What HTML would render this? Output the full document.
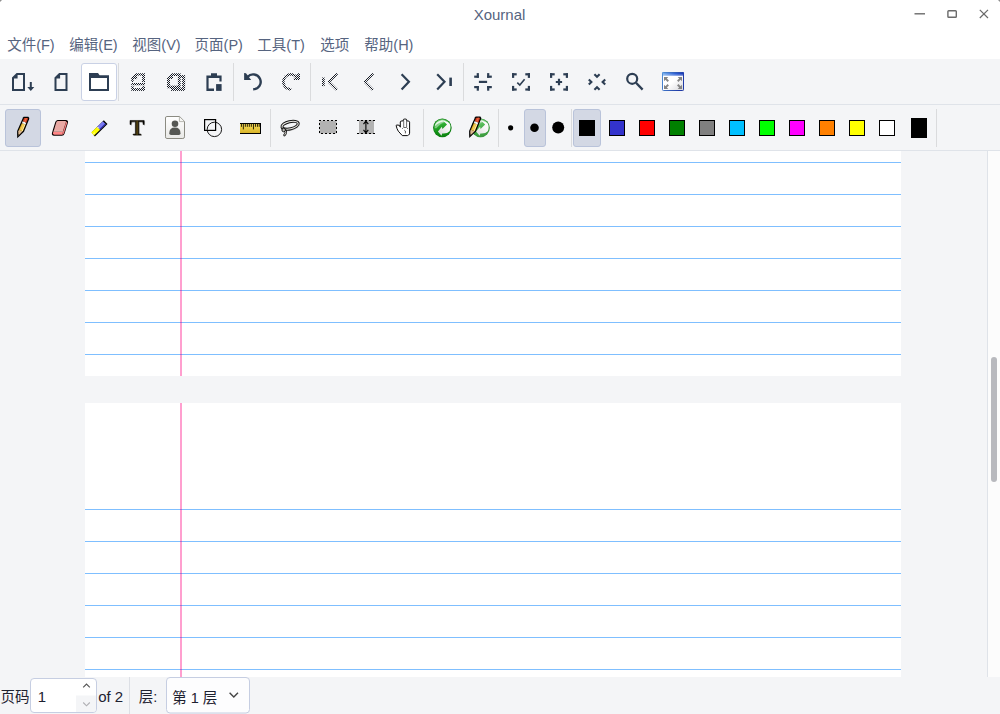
<!DOCTYPE html>
<html><head><meta charset="utf-8"><title>Xournal</title>
<style>html,body{margin:0;padding:0;background:#f4f5f7;overflow:hidden;font-family:"Liberation Sans",sans-serif}body{width:1000px;height:714px}</style>
</head><body><svg width="1000" height="714" viewBox="0 0 1000 714" style="display:block"><defs>
<pattern id="dz" width="2" height="2" patternUnits="userSpaceOnUse"><rect x="0" y="0" width="1" height="1" fill="#15151d"/><rect x="1" y="1" width="1" height="1" fill="#15151d"/></pattern>
<linearGradient id="fsbar" x1="0" y1="0" x2="1" y2="0"><stop offset="0" stop-color="#7fb4ec"/><stop offset="0.6" stop-color="#2f62d6"/><stop offset="1" stop-color="#1a37b4"/></linearGradient>
<linearGradient id="fsbd" x1="0" y1="0" x2="1" y2="0.3"><stop offset="0" stop-color="#4f8fd6"/><stop offset="1" stop-color="#1f3aa6"/></linearGradient><linearGradient id="fsbody" x1="0" y1="0" x2="1" y2="1"><stop offset="0" stop-color="#ffffff"/><stop offset="0.5" stop-color="#ffffff"/><stop offset="1" stop-color="#d4d4d8"/></linearGradient>
<linearGradient id="ruler" x1="0" y1="0" x2="0" y2="1"><stop offset="0" stop-color="#f6dc55"/><stop offset="1" stop-color="#d9b52c"/></linearGradient>
<linearGradient id="docg" x1="0" y1="0" x2="0" y2="1"><stop offset="0" stop-color="#ffffff"/><stop offset="1" stop-color="#e9e9e7"/></linearGradient>
<linearGradient id="greeng" x1="0.2" y1="0" x2="0.5" y2="1"><stop offset="0" stop-color="#8fd98f"/><stop offset="0.35" stop-color="#2fae32"/><stop offset="0.7" stop-color="#109014"/><stop offset="1" stop-color="#0e8a12"/></linearGradient><linearGradient id="gwh" x1="1" y1="0" x2="0.2" y2="1"><stop offset="0" stop-color="#ffffff"/><stop offset="0.45" stop-color="#f4f4f4"/><stop offset="1" stop-color="#d8d8d8"/></linearGradient>
<radialGradient id="greeng2" cx="0.4" cy="0.3" r="0.8"><stop offset="0" stop-color="#7fd67f"/><stop offset="0.6" stop-color="#3aa93c"/><stop offset="1" stop-color="#1d8a20"/></radialGradient>
<linearGradient id="tg" x1="0" y1="0" x2="1" y2="0"><stop offset="0" stop-color="#000"/><stop offset="0.42" stop-color="#1a1200"/><stop offset="0.5" stop-color="#6a5618"/><stop offset="0.58" stop-color="#1a1200"/><stop offset="1" stop-color="#000"/></linearGradient>
</defs>
<rect x="0" y="0" width="1000" height="714" fill="#f4f5f7"/>
<rect x="0" y="0" width="1000" height="59" fill="#ffffff"/>
<path d="M0 0h2L0 2z" fill="#444" opacity=".6"/><path d="M1000 0h-2l2 2z" fill="#444" opacity=".6"/>
<text x="499.5" y="19.6" text-anchor="middle" font-family="'Liberation Sans','Noto Sans CJK SC',sans-serif" font-size="15" fill="#566480">Xournal</text>
<g stroke="#6a6a6a" fill="none" stroke-width="1.4"><path d="M914.5 13.8H925"/><rect x="947.9" y="10.7" width="8.4" height="6.6" rx="0.8"/><path d="M979.8 9.8L988 18M988 9.8L979.8 18" stroke-width="1.2"/></g>
<g font-family="'Liberation Sans','Noto Sans CJK SC',sans-serif" font-size="14.5" fill="#566480">
<text x="7.2" y="49.8">文件(F)</text>
<text x="69.3" y="49.8">编辑(E)</text>
<text x="132.3" y="49.8">视图(V)</text>
<text x="194.6" y="49.8">页面(P)</text>
<text x="257.3" y="49.8">工具(T)</text>
<text x="320.3" y="49.8">选项</text>
<text x="364.3" y="49.8">帮助(H)</text>
</g>
<rect x="0" y="104" width="1000" height="1" fill="#dfe3e9"/>
<rect x="0" y="150" width="1000" height="1" fill="#dfe3e9"/>
<rect x="85" y="151" width="816" height="225" fill="#fff"/>
<rect x="85" y="403" width="816" height="274" fill="#fff"/>
<rect x="85" y="162" width="816" height="1" fill="#7fbfff"/>
<rect x="85" y="194" width="816" height="1" fill="#7fbfff"/>
<rect x="85" y="226" width="816" height="1" fill="#7fbfff"/>
<rect x="85" y="258" width="816" height="1" fill="#7fbfff"/>
<rect x="85" y="290" width="816" height="1" fill="#7fbfff"/>
<rect x="85" y="322" width="816" height="1" fill="#7fbfff"/>
<rect x="85" y="354" width="816" height="1" fill="#7fbfff"/>
<rect x="85" y="509" width="816" height="1" fill="#7fbfff"/>
<rect x="85" y="541" width="816" height="1" fill="#7fbfff"/>
<rect x="85" y="573" width="816" height="1" fill="#7fbfff"/>
<rect x="85" y="605" width="816" height="1" fill="#7fbfff"/>
<rect x="85" y="637" width="816" height="1" fill="#7fbfff"/>
<rect x="85" y="669" width="816" height="1" fill="#7fbfff"/>
<rect x="180" y="151" width="2" height="225" fill="#ff9fcf"/>
<rect x="180" y="403" width="2" height="274" fill="#ff9fcf"/>
<rect x="180" y="162" width="2" height="1" fill="#a673cf"/>
<rect x="180" y="194" width="2" height="1" fill="#a673cf"/>
<rect x="180" y="226" width="2" height="1" fill="#a673cf"/>
<rect x="180" y="258" width="2" height="1" fill="#a673cf"/>
<rect x="180" y="290" width="2" height="1" fill="#a673cf"/>
<rect x="180" y="322" width="2" height="1" fill="#a673cf"/>
<rect x="180" y="354" width="2" height="1" fill="#a673cf"/>
<rect x="180" y="509" width="2" height="1" fill="#a673cf"/>
<rect x="180" y="541" width="2" height="1" fill="#a673cf"/>
<rect x="180" y="573" width="2" height="1" fill="#a673cf"/>
<rect x="180" y="605" width="2" height="1" fill="#a673cf"/>
<rect x="180" y="637" width="2" height="1" fill="#a673cf"/>
<rect x="180" y="669" width="2" height="1" fill="#a673cf"/>
<rect x="987" y="151" width="1" height="526" fill="#dfe3e9"/>
<rect x="988" y="151" width="12" height="526" fill="#fcfcfc"/>
<rect x="991" y="357" width="6" height="125" rx="3" fill="#b8b9be"/>
<text x="0.5" y="702.2" font-family="'Liberation Sans','Noto Sans CJK SC',sans-serif" font-size="14.5" fill="#1e2230">页码</text>
<rect x="30.5" y="678.5" width="66" height="34" rx="3.5" fill="#fff" stroke="#c6cee2"/>
<path d="M76 695.5H96V709a3 3 0 0 1-3 3H76z" fill="#f4f5f7"/>
<text x="37.8" y="702.2" font-family="'Liberation Sans','Noto Sans CJK SC',sans-serif" font-size="15" fill="#1e2230">1</text>
<path d="M83.2 687.3L86.5 684L89.8 687.3" fill="none" stroke="#555" stroke-width="1.15"/>
<path d="M83.2 702.5L86.5 705.8L89.8 702.5" fill="none" stroke="#b0b0b4" stroke-width="1.15"/>
<text x="98.2" y="702.2" font-family="'Liberation Sans','Noto Sans CJK SC',sans-serif" font-size="15" fill="#1e2230">of 2</text>
<rect x="129" y="677" width="1" height="37" fill="#dcdfe5"/>
<text x="138.8" y="702.2" font-family="'Liberation Sans','Noto Sans CJK SC',sans-serif" font-size="14.5" fill="#1e2230">层:</text>
<rect x="166.5" y="677.5" width="83" height="35.5" rx="3.5" fill="#fdfdfe" stroke="#c6cee2"/>
<text x="172.2" y="702.6" font-family="'Liberation Sans','Noto Sans CJK SC',sans-serif" font-size="14.5" fill="#1e2230">第 1 层</text>
<path d="M229.6 692.8L233.8 697L238 692.8" fill="none" stroke="#444" stroke-width="1.4"/>
<rect x="118" y="63" width="1" height="38" fill="#dadbdd"/>
<rect x="233" y="63" width="1" height="38" fill="#dadbdd"/>
<rect x="310" y="63" width="1" height="38" fill="#dadbdd"/>
<rect x="463" y="63" width="1" height="38" fill="#dadbdd"/>
<rect x="81.5" y="63.5" width="35" height="37" rx="2.5" fill="#fff" stroke="#c9d1e5"/>
<path fill-rule="evenodd" fill="#2d3e53" d="M16.6 73H25V91H12V77.6Z M14 78.6V89H23V75H17.6V78.6Z"/>
<path fill="#2d3e53" d="M29.8 82h2v5h2.5L30.8 91L27.3 87H29.8z"/>
<path fill-rule="evenodd" fill="#2d3e53" d="M59.1 73H67.5V91H54.5V77.6Z M56.5 78.6V89H65.5V75H60.1V78.6Z"/>
<path fill-rule="evenodd" fill="#2d3e53" d="M89 73H98L99.6 75.2H109V91H89Z M91 78V89H107V78Z"/>
<g fill="#161a24" shape-rendering="crispEdges"><rect x="136" y="73" width="1" height="1" fill-opacity="0.75"/><rect x="138" y="73" width="1" height="1" fill-opacity="0.75"/><rect x="140" y="73" width="1" height="1" fill-opacity="0.75"/><rect x="142" y="73" width="1" height="1" fill-opacity="0.75"/><rect x="144" y="73" width="1" height="1" fill-opacity="0.75"/><rect x="135" y="74" width="1" height="1"/><rect x="137" y="74" width="1" height="1"/><rect x="139" y="74" width="1" height="1"/><rect x="141" y="74" width="1" height="1"/><rect x="143" y="74" width="1" height="1"/><rect x="134" y="75" width="1" height="1"/><rect x="136" y="75" width="1" height="1"/><rect x="138" y="75" width="1" height="1" fill-opacity="0.62"/><rect x="140" y="75" width="1" height="1" fill-opacity="0.62"/><rect x="142" y="75" width="1" height="1"/><rect x="144" y="75" width="1" height="1"/><rect x="133" y="76" width="1" height="1"/><rect x="135" y="76" width="1" height="1"/><rect x="137" y="76" width="1" height="1" fill-opacity="0.12"/><rect x="143" y="76" width="1" height="1"/><rect x="132" y="77" width="1" height="1"/><rect x="134" y="77" width="1" height="1"/><rect x="136" y="77" width="1" height="1"/><rect x="142" y="77" width="1" height="1" fill-opacity="0.88"/><rect x="144" y="77" width="1" height="1"/><rect x="131" y="78" width="1" height="1" fill-opacity="0.75"/><rect x="133" y="78" width="1" height="1"/><rect x="135" y="78" width="1" height="1"/><rect x="137" y="78" width="1" height="1" fill-opacity="0.12"/><rect x="143" y="78" width="1" height="1"/><rect x="132" y="79" width="1" height="1"/><rect x="134" y="79" width="1" height="1" fill-opacity="0.12"/><rect x="136" y="79" width="1" height="1" fill-opacity="0.12"/><rect x="142" y="79" width="1" height="1" fill-opacity="0.88"/><rect x="144" y="79" width="1" height="1"/><rect x="131" y="80" width="1" height="1" fill-opacity="0.75"/><rect x="133" y="80" width="1" height="1" fill-opacity="0.62"/><rect x="143" y="80" width="1" height="1"/><rect x="132" y="81" width="1" height="1"/><rect x="142" y="81" width="1" height="1" fill-opacity="0.88"/><rect x="144" y="81" width="1" height="1"/><rect x="143" y="82" width="1" height="1" fill-opacity="0.12"/><rect x="132" y="83" width="1" height="1"/><rect x="134" y="83" width="1" height="1"/><rect x="136" y="83" width="1" height="1"/><rect x="138" y="83" width="1" height="1"/><rect x="140" y="83" width="1" height="1"/><rect x="142" y="83" width="1" height="1"/><rect x="144" y="83" width="1" height="1"/><rect x="131" y="84" width="1" height="1" fill-opacity="0.75"/><rect x="133" y="84" width="1" height="1"/><rect x="135" y="84" width="1" height="1"/><rect x="137" y="84" width="1" height="1"/><rect x="139" y="84" width="1" height="1"/><rect x="141" y="84" width="1" height="1"/><rect x="143" y="84" width="1" height="1"/><rect x="132" y="85" width="1" height="1" fill-opacity="0.25"/><rect x="134" y="85" width="1" height="1" fill-opacity="0.25"/><rect x="136" y="85" width="1" height="1" fill-opacity="0.25"/><rect x="138" y="85" width="1" height="1" fill-opacity="0.25"/><rect x="140" y="85" width="1" height="1" fill-opacity="0.25"/><rect x="142" y="85" width="1" height="1" fill-opacity="0.25"/><rect x="144" y="85" width="1" height="1" fill-opacity="0.25"/><rect x="131" y="86" width="1" height="1" fill-opacity="0.66"/><rect x="133" y="86" width="1" height="1" fill-opacity="0.55"/><rect x="143" y="86" width="1" height="1" fill-opacity="0.88"/><rect x="132" y="87" width="1" height="1"/><rect x="142" y="87" width="1" height="1" fill-opacity="0.88"/><rect x="144" y="87" width="1" height="1"/><rect x="131" y="88" width="1" height="1" fill-opacity="0.75"/><rect x="133" y="88" width="1" height="1"/><rect x="135" y="88" width="1" height="1" fill-opacity="0.88"/><rect x="137" y="88" width="1" height="1" fill-opacity="0.88"/><rect x="139" y="88" width="1" height="1" fill-opacity="0.88"/><rect x="141" y="88" width="1" height="1" fill-opacity="0.88"/><rect x="143" y="88" width="1" height="1"/><rect x="132" y="89" width="1" height="1"/><rect x="134" y="89" width="1" height="1"/><rect x="136" y="89" width="1" height="1"/><rect x="138" y="89" width="1" height="1"/><rect x="140" y="89" width="1" height="1"/><rect x="142" y="89" width="1" height="1"/><rect x="144" y="89" width="1" height="1"/><rect x="131" y="90" width="1" height="1" fill-opacity="0.66"/><rect x="133" y="90" width="1" height="1" fill-opacity="0.88"/><rect x="135" y="90" width="1" height="1" fill-opacity="0.88"/><rect x="137" y="90" width="1" height="1" fill-opacity="0.88"/><rect x="139" y="90" width="1" height="1" fill-opacity="0.88"/><rect x="141" y="90" width="1" height="1" fill-opacity="0.88"/><rect x="143" y="90" width="1" height="1" fill-opacity="0.88"/></g>
<g fill="#161a24" shape-rendering="crispEdges"><rect x="172" y="73" width="1" height="1" fill-opacity="0.75"/><rect x="174" y="73" width="1" height="1" fill-opacity="0.75"/><rect x="176" y="73" width="1" height="1" fill-opacity="0.75"/><rect x="178" y="73" width="1" height="1" fill-opacity="0.75"/><rect x="180" y="73" width="1" height="1" fill-opacity="0.47"/><rect x="171" y="74" width="1" height="1"/><rect x="173" y="74" width="1" height="1"/><rect x="175" y="74" width="1" height="1"/><rect x="177" y="74" width="1" height="1"/><rect x="179" y="74" width="1" height="1"/><rect x="170" y="75" width="1" height="1"/><rect x="172" y="75" width="1" height="1"/><rect x="174" y="75" width="1" height="1"/><rect x="176" y="75" width="1" height="1"/><rect x="178" y="75" width="1" height="1"/><rect x="180" y="75" width="1" height="1"/><rect x="182" y="75" width="1" height="1" fill-opacity="0.88"/><rect x="184" y="75" width="1" height="1" fill-opacity="0.88"/><rect x="169" y="76" width="1" height="1"/><rect x="171" y="76" width="1" height="1"/><rect x="177" y="76" width="1" height="1" fill-opacity="0.12"/><rect x="179" y="76" width="1" height="1"/><rect x="181" y="76" width="1" height="1"/><rect x="183" y="76" width="1" height="1"/><rect x="185" y="76" width="1" height="1" fill-opacity="0.12"/><rect x="168" y="77" width="1" height="1"/><rect x="170" y="77" width="1" height="1"/><rect x="172" y="77" width="1" height="1"/><rect x="178" y="77" width="1" height="1"/><rect x="180" y="77" width="1" height="1" fill-opacity="0.86"/><rect x="182" y="77" width="1" height="1"/><rect x="184" y="77" width="1" height="1"/><rect x="167" y="78" width="1" height="1"/><rect x="169" y="78" width="1" height="1"/><rect x="171" y="78" width="1" height="1"/><rect x="177" y="78" width="1" height="1" fill-opacity="0.12"/><rect x="179" y="78" width="1" height="1"/><rect x="183" y="78" width="1" height="1"/><rect x="185" y="78" width="1" height="1" fill-opacity="0.12"/><rect x="168" y="79" width="1" height="1"/><rect x="178" y="79" width="1" height="1"/><rect x="180" y="79" width="1" height="1" fill-opacity="0.62"/><rect x="182" y="79" width="1" height="1" fill-opacity="0.88"/><rect x="184" y="79" width="1" height="1"/><rect x="167" y="80" width="1" height="1"/><rect x="169" y="80" width="1" height="1"/><rect x="177" y="80" width="1" height="1" fill-opacity="0.12"/><rect x="179" y="80" width="1" height="1"/><rect x="183" y="80" width="1" height="1"/><rect x="185" y="80" width="1" height="1" fill-opacity="0.12"/><rect x="168" y="81" width="1" height="1"/><rect x="178" y="81" width="1" height="1"/><rect x="180" y="81" width="1" height="1" fill-opacity="0.62"/><rect x="182" y="81" width="1" height="1" fill-opacity="0.88"/><rect x="184" y="81" width="1" height="1"/><rect x="167" y="82" width="1" height="1"/><rect x="169" y="82" width="1" height="1"/><rect x="177" y="82" width="1" height="1" fill-opacity="0.12"/><rect x="179" y="82" width="1" height="1"/><rect x="183" y="82" width="1" height="1"/><rect x="185" y="82" width="1" height="1" fill-opacity="0.12"/><rect x="168" y="83" width="1" height="1"/><rect x="178" y="83" width="1" height="1"/><rect x="180" y="83" width="1" height="1" fill-opacity="0.62"/><rect x="182" y="83" width="1" height="1" fill-opacity="0.88"/><rect x="184" y="83" width="1" height="1"/><rect x="167" y="84" width="1" height="1"/><rect x="169" y="84" width="1" height="1"/><rect x="177" y="84" width="1" height="1" fill-opacity="0.12"/><rect x="179" y="84" width="1" height="1"/><rect x="183" y="84" width="1" height="1"/><rect x="185" y="84" width="1" height="1" fill-opacity="0.12"/><rect x="168" y="85" width="1" height="1"/><rect x="170" y="85" width="1" height="1" fill-opacity="0.38"/><rect x="172" y="85" width="1" height="1" fill-opacity="0.38"/><rect x="174" y="85" width="1" height="1" fill-opacity="0.38"/><rect x="176" y="85" width="1" height="1" fill-opacity="0.38"/><rect x="178" y="85" width="1" height="1"/><rect x="180" y="85" width="1" height="1" fill-opacity="0.62"/><rect x="182" y="85" width="1" height="1" fill-opacity="0.88"/><rect x="184" y="85" width="1" height="1"/><rect x="167" y="86" width="1" height="1"/><rect x="169" y="86" width="1" height="1"/><rect x="171" y="86" width="1" height="1"/><rect x="173" y="86" width="1" height="1"/><rect x="175" y="86" width="1" height="1"/><rect x="177" y="86" width="1" height="1"/><rect x="179" y="86" width="1" height="1"/><rect x="183" y="86" width="1" height="1"/><rect x="185" y="86" width="1" height="1" fill-opacity="0.12"/><rect x="168" y="87" width="1" height="1"/><rect x="170" y="87" width="1" height="1"/><rect x="172" y="87" width="1" height="1"/><rect x="174" y="87" width="1" height="1"/><rect x="176" y="87" width="1" height="1"/><rect x="178" y="87" width="1" height="1"/><rect x="180" y="87" width="1" height="1" fill-opacity="0.62"/><rect x="182" y="87" width="1" height="1" fill-opacity="0.88"/><rect x="184" y="87" width="1" height="1"/><rect x="167" y="88" width="1" height="1" fill-opacity="0.25"/><rect x="169" y="88" width="1" height="1" fill-opacity="0.25"/><rect x="171" y="88" width="1" height="1"/><rect x="173" y="88" width="1" height="1"/><rect x="175" y="88" width="1" height="1"/><rect x="177" y="88" width="1" height="1"/><rect x="179" y="88" width="1" height="1"/><rect x="181" y="88" width="1" height="1" fill-opacity="0.88"/><rect x="183" y="88" width="1" height="1"/><rect x="185" y="88" width="1" height="1" fill-opacity="0.12"/><rect x="172" y="89" width="1" height="1"/><rect x="174" y="89" width="1" height="1"/><rect x="176" y="89" width="1" height="1"/><rect x="178" y="89" width="1" height="1"/><rect x="180" y="89" width="1" height="1"/><rect x="182" y="89" width="1" height="1"/><rect x="184" y="89" width="1" height="1"/><rect x="171" y="90" width="1" height="1" fill-opacity="0.88"/><rect x="173" y="90" width="1" height="1" fill-opacity="0.88"/><rect x="175" y="90" width="1" height="1" fill-opacity="0.88"/><rect x="177" y="90" width="1" height="1" fill-opacity="0.88"/><rect x="179" y="90" width="1" height="1" fill-opacity="0.88"/><rect x="181" y="90" width="1" height="1" fill-opacity="0.88"/><rect x="183" y="90" width="1" height="1" fill-opacity="0.88"/></g>
<g fill="#161a24" shape-rendering="crispEdges"><rect x="288" y="73" width="1" height="1" fill-opacity="0.55"/><rect x="290" y="73" width="1" height="1" fill-opacity="0.88"/><rect x="292" y="73" width="1" height="1" fill-opacity="0.69"/><rect x="298" y="73" width="1" height="1" fill-opacity="0.75"/><rect x="287" y="74" width="1" height="1"/><rect x="289" y="74" width="1" height="1"/><rect x="291" y="74" width="1" height="1"/><rect x="293" y="74" width="1" height="1"/><rect x="295" y="74" width="1" height="1" fill-opacity="0.45"/><rect x="297" y="74" width="1" height="1" fill-opacity="0.88"/><rect x="299" y="74" width="1" height="1"/><rect x="284" y="75" width="1" height="1" fill-opacity="0.23"/><rect x="286" y="75" width="1" height="1"/><rect x="288" y="75" width="1" height="1"/><rect x="290" y="75" width="1" height="1" fill-opacity="0.66"/><rect x="292" y="75" width="1" height="1" fill-opacity="0.89"/><rect x="294" y="75" width="1" height="1"/><rect x="296" y="75" width="1" height="1" fill-opacity="0.92"/><rect x="298" y="75" width="1" height="1"/><rect x="285" y="76" width="1" height="1"/><rect x="287" y="76" width="1" height="1" fill-opacity="0.64"/><rect x="293" y="76" width="1" height="1" fill-opacity="0.30"/><rect x="295" y="76" width="1" height="1"/><rect x="297" y="76" width="1" height="1"/><rect x="299" y="76" width="1" height="1"/><rect x="284" y="77" width="1" height="1"/><rect x="286" y="77" width="1" height="1" fill-opacity="0.44"/><rect x="294" y="77" width="1" height="1" fill-opacity="0.36"/><rect x="296" y="77" width="1" height="1"/><rect x="298" y="77" width="1" height="1"/><rect x="283" y="78" width="1" height="1"/><rect x="285" y="78" width="1" height="1" fill-opacity="0.61"/><rect x="293" y="78" width="1" height="1" fill-opacity="0.16"/><rect x="295" y="78" width="1" height="1"/><rect x="297" y="78" width="1" height="1"/><rect x="299" y="78" width="1" height="1"/><rect x="282" y="79" width="1" height="1" fill-opacity="0.56"/><rect x="284" y="79" width="1" height="1"/><rect x="294" y="79" width="1" height="1"/><rect x="296" y="79" width="1" height="1"/><rect x="298" y="79" width="1" height="1"/><rect x="283" y="80" width="1" height="1"/><rect x="282" y="81" width="1" height="1" fill-opacity="0.88"/><rect x="284" y="81" width="1" height="1" fill-opacity="0.62"/><rect x="283" y="82" width="1" height="1"/><rect x="282" y="83" width="1" height="1" fill-opacity="0.75"/><rect x="284" y="83" width="1" height="1" fill-opacity="0.88"/><rect x="283" y="84" width="1" height="1"/><rect x="285" y="84" width="1" height="1" fill-opacity="0.25"/><rect x="282" y="85" width="1" height="1" fill-opacity="0.12"/><rect x="284" y="85" width="1" height="1"/><rect x="283" y="86" width="1" height="1" fill-opacity="0.56"/><rect x="285" y="86" width="1" height="1"/><rect x="284" y="87" width="1" height="1" fill-opacity="0.80"/><rect x="286" y="87" width="1" height="1"/><rect x="288" y="87" width="1" height="1" fill-opacity="0.44"/><rect x="285" y="88" width="1" height="1" fill-opacity="0.73"/><rect x="287" y="88" width="1" height="1"/><rect x="289" y="88" width="1" height="1"/><rect x="291" y="88" width="1" height="1" fill-opacity="0.30"/><rect x="286" y="89" width="1" height="1" fill-opacity="0.39"/><rect x="288" y="89" width="1" height="1"/><rect x="290" y="89" width="1" height="1"/><rect x="289" y="90" width="1" height="1" fill-opacity="0.44"/></g>
<g fill="#161a24" shape-rendering="crispEdges"><rect x="336" y="73" width="1" height="1" fill-opacity="0.83"/><rect x="335" y="74" width="1" height="1"/><rect x="337" y="74" width="1" height="1" fill-opacity="0.75"/><rect x="334" y="75" width="1" height="1"/><rect x="336" y="75" width="1" height="1" fill-opacity="0.91"/><rect x="333" y="76" width="1" height="1"/><rect x="335" y="76" width="1" height="1" fill-opacity="0.91"/><rect x="322" y="77" width="1" height="1" fill-opacity="0.50"/><rect x="324" y="77" width="1" height="1" fill-opacity="0.38"/><rect x="332" y="77" width="1" height="1"/><rect x="334" y="77" width="1" height="1" fill-opacity="0.91"/><rect x="323" y="78" width="1" height="1"/><rect x="331" y="78" width="1" height="1"/><rect x="333" y="78" width="1" height="1" fill-opacity="0.86"/><rect x="322" y="79" width="1" height="1"/><rect x="324" y="79" width="1" height="1" fill-opacity="0.75"/><rect x="330" y="79" width="1" height="1"/><rect x="332" y="79" width="1" height="1" fill-opacity="0.84"/><rect x="323" y="80" width="1" height="1"/><rect x="329" y="80" width="1" height="1"/><rect x="331" y="80" width="1" height="1" fill-opacity="0.84"/><rect x="322" y="81" width="1" height="1"/><rect x="324" y="81" width="1" height="1" fill-opacity="0.75"/><rect x="328" y="81" width="1" height="1"/><rect x="330" y="81" width="1" height="1" fill-opacity="0.86"/><rect x="323" y="82" width="1" height="1"/><rect x="329" y="82" width="1" height="1"/><rect x="331" y="82" width="1" height="1" fill-opacity="0.23"/><rect x="322" y="83" width="1" height="1"/><rect x="324" y="83" width="1" height="1" fill-opacity="0.75"/><rect x="328" y="83" width="1" height="1" fill-opacity="0.23"/><rect x="330" y="83" width="1" height="1"/><rect x="332" y="83" width="1" height="1" fill-opacity="0.23"/><rect x="323" y="84" width="1" height="1"/><rect x="329" y="84" width="1" height="1" fill-opacity="0.23"/><rect x="331" y="84" width="1" height="1"/><rect x="333" y="84" width="1" height="1" fill-opacity="0.23"/><rect x="322" y="85" width="1" height="1"/><rect x="324" y="85" width="1" height="1" fill-opacity="0.75"/><rect x="330" y="85" width="1" height="1" fill-opacity="0.23"/><rect x="332" y="85" width="1" height="1"/><rect x="334" y="85" width="1" height="1" fill-opacity="0.23"/><rect x="323" y="86" width="1" height="1" fill-opacity="0.12"/><rect x="331" y="86" width="1" height="1" fill-opacity="0.23"/><rect x="333" y="86" width="1" height="1"/><rect x="335" y="86" width="1" height="1" fill-opacity="0.23"/><rect x="332" y="87" width="1" height="1" fill-opacity="0.23"/><rect x="334" y="87" width="1" height="1"/><rect x="336" y="87" width="1" height="1" fill-opacity="0.23"/><rect x="333" y="88" width="1" height="1" fill-opacity="0.23"/><rect x="335" y="88" width="1" height="1"/><rect x="337" y="88" width="1" height="1" fill-opacity="0.23"/><rect x="334" y="89" width="1" height="1" fill-opacity="0.23"/><rect x="336" y="89" width="1" height="1"/><rect x="335" y="90" width="1" height="1" fill-opacity="0.23"/></g>
<g fill="#161a24" shape-rendering="crispEdges"><rect x="372" y="73" width="1" height="1" fill-opacity="0.83"/><rect x="371" y="74" width="1" height="1"/><rect x="373" y="74" width="1" height="1" fill-opacity="0.75"/><rect x="370" y="75" width="1" height="1"/><rect x="372" y="75" width="1" height="1" fill-opacity="0.91"/><rect x="369" y="76" width="1" height="1"/><rect x="371" y="76" width="1" height="1" fill-opacity="0.91"/><rect x="368" y="77" width="1" height="1"/><rect x="370" y="77" width="1" height="1" fill-opacity="0.91"/><rect x="367" y="78" width="1" height="1"/><rect x="369" y="78" width="1" height="1" fill-opacity="0.86"/><rect x="366" y="79" width="1" height="1"/><rect x="368" y="79" width="1" height="1" fill-opacity="0.84"/><rect x="365" y="80" width="1" height="1"/><rect x="367" y="80" width="1" height="1" fill-opacity="0.84"/><rect x="364" y="81" width="1" height="1"/><rect x="366" y="81" width="1" height="1" fill-opacity="0.86"/><rect x="365" y="82" width="1" height="1"/><rect x="367" y="82" width="1" height="1" fill-opacity="0.23"/><rect x="364" y="83" width="1" height="1" fill-opacity="0.23"/><rect x="366" y="83" width="1" height="1"/><rect x="368" y="83" width="1" height="1" fill-opacity="0.23"/><rect x="365" y="84" width="1" height="1" fill-opacity="0.23"/><rect x="367" y="84" width="1" height="1"/><rect x="369" y="84" width="1" height="1" fill-opacity="0.23"/><rect x="366" y="85" width="1" height="1" fill-opacity="0.23"/><rect x="368" y="85" width="1" height="1"/><rect x="370" y="85" width="1" height="1" fill-opacity="0.23"/><rect x="367" y="86" width="1" height="1" fill-opacity="0.23"/><rect x="369" y="86" width="1" height="1"/><rect x="371" y="86" width="1" height="1" fill-opacity="0.23"/><rect x="368" y="87" width="1" height="1" fill-opacity="0.23"/><rect x="370" y="87" width="1" height="1"/><rect x="372" y="87" width="1" height="1" fill-opacity="0.23"/><rect x="369" y="88" width="1" height="1" fill-opacity="0.23"/><rect x="371" y="88" width="1" height="1"/><rect x="373" y="88" width="1" height="1" fill-opacity="0.23"/><rect x="370" y="89" width="1" height="1" fill-opacity="0.23"/><rect x="372" y="89" width="1" height="1"/><rect x="371" y="90" width="1" height="1" fill-opacity="0.23"/></g>
<path fill="#2d3e53" d="M211 73.2H217V75.6H221.6V81.6H219.4V78H208.6V88.6H214V91H206.4V75.6H211Z"/>
<rect x="216.1" y="84.1" width="5.5" height="6.8" fill="#2d3e53"/>
<path fill="none" stroke="#2d3e53" stroke-width="2.4" d="M247.5 77.06A7.45 7.45 0 1 1 253.2 89.3"/>
<path fill="#2d3e53" d="M244.1 73.1L246 73.3L251.2 79.9H244.1Z"/>
<path fill="none" stroke="#2d3e53" stroke-width="2.2" d="M401.6 74.2L408.9 81.8L401.6 89.4"/>
<path fill="none" stroke="#2d3e53" stroke-width="2.2" d="M437.2 74.2L444.5 81.8L437.2 89.4"/>
<rect x="449.3" y="77.6" width="2.6" height="8.4" fill="#2d3e53"/>
<rect x="474.20" y="75.60" width="4.70" height="2.20" fill="#2d3e53"/><rect x="476.70" y="73.10" width="2.20" height="4.70" fill="#2d3e53"/>
<rect x="487.10" y="75.60" width="4.70" height="2.20" fill="#2d3e53"/><rect x="487.10" y="73.10" width="2.20" height="4.70" fill="#2d3e53"/>
<rect x="474.20" y="86.00" width="4.70" height="2.20" fill="#2d3e53"/><rect x="476.70" y="86.00" width="2.20" height="4.70" fill="#2d3e53"/>
<rect x="487.10" y="86.00" width="4.70" height="2.20" fill="#2d3e53"/><rect x="487.10" y="86.00" width="2.20" height="4.70" fill="#2d3e53"/>
<rect x="478.9" y="80.8" width="8.2" height="2.2" fill="#2d3e53"/>
<rect x="512.00" y="73.20" width="4.70" height="2.20" fill="#2d3e53"/><rect x="512.00" y="73.20" width="2.20" height="4.70" fill="#2d3e53"/>
<rect x="525.30" y="73.20" width="4.70" height="2.20" fill="#2d3e53"/><rect x="527.80" y="73.20" width="2.20" height="4.70" fill="#2d3e53"/>
<rect x="512.00" y="88.40" width="4.70" height="2.20" fill="#2d3e53"/><rect x="512.00" y="85.90" width="2.20" height="4.70" fill="#2d3e53"/>
<rect x="525.30" y="88.40" width="4.70" height="2.20" fill="#2d3e53"/><rect x="527.80" y="85.90" width="2.20" height="4.70" fill="#2d3e53"/>
<path fill="none" stroke="#2d3e53" stroke-width="1.6" d="M517.3 82.6L519.8 85.1L524.6 79.3"/>
<rect x="550.00" y="73.20" width="4.70" height="2.20" fill="#2d3e53"/><rect x="550.00" y="73.20" width="2.20" height="4.70" fill="#2d3e53"/>
<rect x="563.30" y="73.20" width="4.70" height="2.20" fill="#2d3e53"/><rect x="565.80" y="73.20" width="2.20" height="4.70" fill="#2d3e53"/>
<rect x="550.00" y="88.40" width="4.70" height="2.20" fill="#2d3e53"/><rect x="550.00" y="85.90" width="2.20" height="4.70" fill="#2d3e53"/>
<rect x="563.30" y="88.40" width="4.70" height="2.20" fill="#2d3e53"/><rect x="565.80" y="85.90" width="2.20" height="4.70" fill="#2d3e53"/>
<path fill="#2d3e53" d="M557.9 78.8h2.2v2.1h2v2.2h-2v2.1h-2.2v-2.1h-2.1v-2.2h2.1z"/>
<g fill="none" stroke="#2d3e53" stroke-width="2.1"><path d="M594.4 74.2L597 76.8L599.6 74.2"/><path d="M594.4 89.8L597 87.2L599.6 89.8"/><path d="M588.8 79.4L591.4 82L588.8 84.6"/><path d="M605.2 79.4L602.6 82L605.2 84.6"/></g>
<circle cx="632.2" cy="78.8" r="5" fill="none" stroke="#2d3e53" stroke-width="2.2"/>
<path d="M636 82.8L642.6 89.6" stroke="#2d3e53" stroke-width="2.3" fill="none"/>
<rect x="662" y="72" width="22" height="19" rx="1" fill="url(#fsbody)"/>
<path d="M662 76V73Q662 72 663 72H683Q684 72 684 73V76Z" fill="url(#fsbar)"/>
<rect x="663" y="74.6" width="20" height="1.4" fill="#fff" opacity="0.45"/>
<rect x="662.5" y="72.5" width="21" height="18" rx="0.8" fill="none" stroke="url(#fsbd)"/>
<g fill="#858585"><path d="M664 77h4.3l-1.45 1.45 2.1 2.1-1.4 1.4-2.1-2.1-1.45 1.45z"/><path d="M664 77h4.3l-1.45 1.45 2.1 2.1-1.4 1.4-2.1-2.1-1.45 1.45z" transform="translate(1346 0) scale(-1 1)"/><path d="M664 77h4.3l-1.45 1.45 2.1 2.1-1.4 1.4-2.1-2.1-1.45 1.45z" transform="translate(0 166) scale(1 -1)"/><path d="M664 77h4.3l-1.45 1.45 2.1 2.1-1.4 1.4-2.1-2.1-1.45 1.45z" transform="translate(1346 166) scale(-1 -1)"/></g><rect x="270" y="109" width="1" height="38" fill="#dadbdd"/>
<rect x="423" y="109" width="1" height="38" fill="#dadbdd"/>
<rect x="498" y="109" width="1" height="38" fill="#dadbdd"/>
<rect x="571" y="109" width="1" height="38" fill="#dadbdd"/>
<rect x="936" y="109" width="1" height="38" fill="#dadbdd"/>
<rect x="5.5" y="109.5" width="35" height="37" rx="2.5" fill="#d3d8e4" stroke="#b9c3da"/>
<rect x="524.5" y="109.5" width="21" height="37" rx="2.5" fill="#d3d8e4" stroke="#b9c3da"/>
<rect x="573.5" y="109.5" width="27" height="37" rx="2.5" fill="#d3d8e4" stroke="#b9c3da"/>
<g transform="translate(0 0)" opacity="1.0"><clipPath id="pc1"><path d="M18.3 135.8L18.3 131.2L24.0 118.4L24.4 117.9H27.6L27.95 118.8L22.9 131.1Z"/></clipPath><path d="M17.2 138.2L17.1 131.1L23.0 117.5L23.7 116.8H28.4L29.3 118.1L29.1 119.2L24.0 131.7Z" fill="#000"/><g clip-path="url(#pc1)"><path d="M13.64 137.15 L17.19 128.98 L24.53 132.17 L20.99 140.34Z" fill="#dcb88e"/><path d="M13.64 137.15 L15.55 132.75 L22.90 135.93 L20.99 140.34Z" fill="#3a2a1a"/><path d="M17.19 128.98 L20.05 122.37 L27.40 125.56 L24.53 132.17Z" fill="#e4b12a"/><path d="M20.03 130.22 L22.90 123.61 L24.18 124.16 L21.32 130.77Z" fill="#f3d25e"/><path d="M21.68 130.93 L24.55 124.32 L25.38 124.68 L22.51 131.29Z" fill="#fff3b8"/><path d="M20.05 122.37 L20.93 120.35 L28.27 123.54 L27.40 125.56Z" fill="#f4f4f0"/><path d="M20.93 120.35 L23.20 115.12 L30.54 118.30 L28.27 123.54Z" fill="#d5401f"/><path d="M24.05 121.71 L26.32 116.47 L27.42 116.95 L25.15 122.18Z" fill="#e8694a"/></g></g>
<path d="M57.6 119.9H65.9Q68.7 120.3 67.9 122.9L64.5 133.8Q63.9 135.6 61.8 135.8H54Q51.2 135.5 52 132.8L55.3 122Q55.9 120.1 57.6 119.9Z" fill="#0a0000"/>
<path d="M58 120.9H65.1Q66.3 120.9 66 121.9L63 131H53.7L56.4 122.1Q56.8 121 58 120.9Z" fill="#e9a9a4"/>
<path d="M53.3 131.5H63L62.6 134.7H54.3Q52.8 134.6 53 133.2Z" fill="#ff8686"/>
<path d="M66.3 121.5L67.2 122.7L63.9 133.6L62.8 134.6L63.2 131.2Z" fill="#fb8080"/>
<path d="M53.6 131.3H63.1" stroke="#f8dad4" stroke-width="0.7" fill="none"/>
<path d="M91.77 132.32 L103.80 120.30 L107.51 124.09 L94.90 136.39 L94.00 135.46Z" fill="#000" /><path d="M91.20 132.60 L97.21 126.73 L100.08 129.66 L94.07 135.54Z" fill="#ffff00" /><path d="M97.21 126.73 L102.87 121.21 L105.74 124.14 L100.08 129.66Z" fill="#7a7af4" /><path d="M100.02 128.46 L105.11 123.50 L105.74 124.14 L100.08 129.66Z" fill="#2a2aa8" /><path d="M97.13 127.65 L97.99 126.81 L98.97 127.81 L98.11 128.65Z" fill="#ffffff" opacity="0.85"/><path d="M92.88 134.04 L94.60 132.36 L95.16 132.93 L93.44 134.61Z" fill="#fffbd0" opacity="0.8"/>
<path d="M133.05 135V134.21L135.36 133.92V121.61H134.81Q132.33 121.61 131.32 121.83L131.02 124.53H130.04V120.46H144.16V124.53H143.16L142.87 121.83Q141.97 121.63 139.32 121.63H138.79V133.92L141.09 134.21V135Z" fill="#8a8a8a" opacity="0.55" transform="translate(0.9 0.9)"/>
<path d="M133.05 135V134.21L135.36 133.92V121.61H134.81Q132.33 121.61 131.32 121.83L131.02 124.53H130.04V120.46H144.16V124.53H143.16L142.87 121.83Q141.97 121.63 139.32 121.63H138.79V133.92L141.09 134.21V135Z" fill="url(#tg)" stroke="#0a0800" stroke-width="0.55"/>
<path d="M166.8 116.5H179.6L184.5 121.4V136.8Q184.5 138.5 182.8 138.5H166.8Q165.5 138.5 165.5 136.8V118Q165.5 116.5 166.8 116.5Z" fill="url(#docg)" stroke="#8b8b82" stroke-width="1"/>
<path d="M179.4 116.8V121.6H184.3" fill="#f6f6f4" stroke="#a8a8a0" stroke-width="0.8"/>
<circle cx="175" cy="123.7" r="3.3" fill="#555753"/>
<path d="M169.3 133.2Q169.3 127.6 174.9 127.6Q180.5 127.6 180.5 133.2Q180.5 134.9 178.8 134.9H171Q169.3 134.9 169.3 133.2Z" fill="#555753"/>
<rect x="204.6" y="119.6" width="11" height="10.8" fill="none" stroke="#000" stroke-width="1.2"/>
<circle cx="214.4" cy="129.4" r="7.2" fill="none" stroke="#000" stroke-width="0.9"/>
<rect x="240" y="123" width="21" height="11" fill="#000"/>
<rect x="240" y="124" width="20" height="9" fill="url(#ruler)"/>
<rect x="240.95" y="123.6" width="0.9" height="3.2" fill="#1a1200"/>
<rect x="242.85" y="123.6" width="0.9" height="5.8" fill="#1a1200"/>
<rect x="244.85" y="123.6" width="0.9" height="3.2" fill="#1a1200"/>
<rect x="246.85" y="123.6" width="0.9" height="3.2" fill="#1a1200"/>
<rect x="248.85" y="123.6" width="0.9" height="3.2" fill="#1a1200"/>
<rect x="250.85" y="123.6" width="0.9" height="3.2" fill="#1a1200"/>
<rect x="252.95" y="123.6" width="0.9" height="5.8" fill="#1a1200"/>
<rect x="254.95" y="123.6" width="0.9" height="3.2" fill="#1a1200"/>
<rect x="256.95" y="123.6" width="0.9" height="3.2" fill="#1a1200"/>
<rect x="258.75" y="123.6" width="0.9" height="3.2" fill="#1a1200"/>
<g fill="none" stroke-linecap="round"><ellipse cx="290.5" cy="125.7" rx="8.5" ry="3.8" transform="rotate(-13 290.5 125.7)" stroke="#bbb" stroke-width="2.6" opacity="0.5" transform-origin="0 0"/><ellipse cx="290.1" cy="125.2" rx="8.3" ry="3.6" transform="rotate(-13 290.1 125.2)" stroke="#141414" stroke-width="3"/><ellipse cx="290.1" cy="125.2" rx="8.3" ry="3.6" transform="rotate(-13 290.1 125.2)" stroke="#ecebe6" stroke-width="1.05"/><path d="M283.2 128.6Q286.2 130 285.8 132.4Q285.5 134.2 284.4 135.2" stroke="#1c1c1c" stroke-width="2.5"/><path d="M283.2 128.6Q286.2 130 285.8 132.4Q285.5 134.2 284.4 135.2" stroke="#e4e3de" stroke-width="0.9"/><circle cx="283.7" cy="130" r="1.8" fill="#b9b8b2" stroke="#1c1c1c" stroke-width="1"/></g>
<rect x="319.5" y="120.5" width="17" height="13" fill="#b2b2b2"/>
<rect x="319.5" y="120.5" width="17" height="13" fill="none" stroke="#000" stroke-width="1" stroke-dasharray="2 2" stroke-dashoffset="0.5" shape-rendering="crispEdges"/>
<rect x="359" y="120" width="15" height="14" fill="#b2b2b2"/>
<path d="M357 120.5H375M357 133.5H375" stroke="#000" stroke-width="1" stroke-dasharray="2 2" shape-rendering="crispEdges"/>
<path d="M365.9 121.4V132.6M363.5 124.2L365.9 121.2L368.3 124.2M363.5 129.8L365.9 132.8L368.3 129.8" fill="none" stroke="#000" stroke-width="1.1"/>
<path d="M396.2 125.8Q396 125 396.9 125L399.4 125.3L400.3 127.2V122Q400.3 121.2 401.1 121.1L403.3 120.8V119.9Q403.4 119.1 404.2 119.1H405.9Q406.6 119.1 406.7 119.9V120.8L408.8 121.2Q409.6 121.4 409.6 122.2V133.2Q409.5 134.4 408.6 135L407.4 135.6H402.3L398.3 131.2Q396.8 128.8 396.2 125.8Z" fill="#fff" stroke="#0a0a0a" stroke-width="1" stroke-linejoin="round"/>
<path d="M403.7 120.8V127.5H406.6V120.8" stroke="#4a4a4a" stroke-width="0.8" fill="none"/>
<path d="M404.3 130.2L405.4 131V133.4" stroke="#333" stroke-width="0.8" fill="none"/>
<rect x="402" y="128.1" width="0.9" height="0.8" fill="#555"/><rect x="407" y="128.1" width="0.9" height="0.8" fill="#555"/>
<g transform="translate(0.00 0.00)" opacity="1.0"><circle cx="442.35" cy="127.85" r="9.3" fill="#0c7d10"/><circle cx="442.35" cy="127.85" r="8.5" fill="url(#greeng)"/><path d="M434.6 126.6Q435.2 121.6 441.6 120.2Q444.4 119.9 446 121.2Q439.6 121.4 434.6 126.6Z" fill="#fff" opacity="0.85"/><path d="M434.5 127.4Q437.6 122 445.8 121.3Q440 123.6 436 128.6Z" fill="#fff" opacity="0.4"/><path d="M437.9 131.5L441.9 126.8L442.4 128.9Q444.6 126.8 447 124.4L443.4 121Q447.6 120.4 449.6 123.4Q451.4 127 449.6 131.2Q447.2 134 442.2 133.5L441.5 135.8Z" fill="url(#gwh)"/></g>
<g transform="translate(38.15 0.00)" opacity="1.0"><circle cx="442.35" cy="127.85" r="9.3" fill="#0c7d10"/><circle cx="442.35" cy="127.85" r="8.5" fill="url(#greeng)"/><path d="M434.6 126.6Q435.2 121.6 441.6 120.2Q444.4 119.9 446 121.2Q439.6 121.4 434.6 126.6Z" fill="#fff" opacity="0.85"/><path d="M434.5 127.4Q437.6 122 445.8 121.3Q440 123.6 436 128.6Z" fill="#fff" opacity="0.4"/><path d="M437.9 131.5L441.9 126.8L442.4 128.9Q444.6 126.8 447 124.4L443.4 121Q447.6 120.4 449.6 123.4Q451.4 127 449.6 131.2Q447.2 134 442.2 133.5L441.5 135.8Z" fill="url(#gwh)"/><circle cx="442.35" cy="127.85" r="9.3" fill="#fff" opacity="0.2"/></g>
<g transform="translate(452 -0.2)" opacity="1.0"><clipPath id="pc2"><path d="M18.3 135.8L18.3 131.2L24.0 118.4L24.4 117.9H27.6L27.95 118.8L22.9 131.1Z"/></clipPath><path d="M17.2 138.2L17.1 131.1L23.0 117.5L23.7 116.8H28.4L29.3 118.1L29.1 119.2L24.0 131.7Z" fill="#000"/><g clip-path="url(#pc2)"><path d="M13.64 137.15 L17.19 128.98 L24.53 132.17 L20.99 140.34Z" fill="#dcb88e"/><path d="M13.64 137.15 L15.55 132.75 L22.90 135.93 L20.99 140.34Z" fill="#3a2a1a"/><path d="M17.19 128.98 L20.05 122.37 L27.40 125.56 L24.53 132.17Z" fill="#e4b12a"/><path d="M20.03 130.22 L22.90 123.61 L24.18 124.16 L21.32 130.77Z" fill="#f3d25e"/><path d="M21.68 130.93 L24.55 124.32 L25.38 124.68 L22.51 131.29Z" fill="#fff3b8"/><path d="M20.05 122.37 L20.93 120.35 L28.27 123.54 L27.40 125.56Z" fill="#f4f4f0"/><path d="M20.93 120.35 L23.20 115.12 L30.54 118.30 L28.27 123.54Z" fill="#d5401f"/><path d="M24.05 121.71 L26.32 116.47 L27.42 116.95 L25.15 122.18Z" fill="#e8694a"/></g></g>
<circle cx="510.6" cy="127.8" r="2.6" fill="#000"/>
<circle cx="534.5" cy="127.8" r="4.3" fill="#000"/>
<circle cx="558.2" cy="127.6" r="6" fill="#000"/>
<rect x="579" y="120" width="16" height="16" fill="#000"/>
<rect x="609" y="120" width="16" height="16" fill="#000"/><rect x="610" y="121" width="14" height="14" fill="#3333cc"/>
<rect x="639" y="120" width="16" height="16" fill="#000"/><rect x="640" y="121" width="14" height="14" fill="#ff0000"/>
<rect x="669" y="120" width="16" height="16" fill="#000"/><rect x="670" y="121" width="14" height="14" fill="#008000"/>
<rect x="699" y="120" width="16" height="16" fill="#000"/><rect x="700" y="121" width="14" height="14" fill="#808080"/>
<rect x="729" y="120" width="16" height="16" fill="#000"/><rect x="730" y="121" width="14" height="14" fill="#00c0ff"/>
<rect x="759" y="120" width="16" height="16" fill="#000"/><rect x="760" y="121" width="14" height="14" fill="#00ff00"/>
<rect x="789" y="120" width="16" height="16" fill="#000"/><rect x="790" y="121" width="14" height="14" fill="#ff00ff"/>
<rect x="819" y="120" width="16" height="16" fill="#000"/><rect x="820" y="121" width="14" height="14" fill="#ff8000"/>
<rect x="849" y="120" width="16" height="16" fill="#000"/><rect x="850" y="121" width="14" height="14" fill="#ffff00"/>
<rect x="879" y="120" width="16" height="16" fill="#000"/><rect x="880" y="121" width="14" height="14" fill="#ffffff"/>
<rect x="911" y="118" width="16" height="20" fill="#000"/></svg></body></html>
